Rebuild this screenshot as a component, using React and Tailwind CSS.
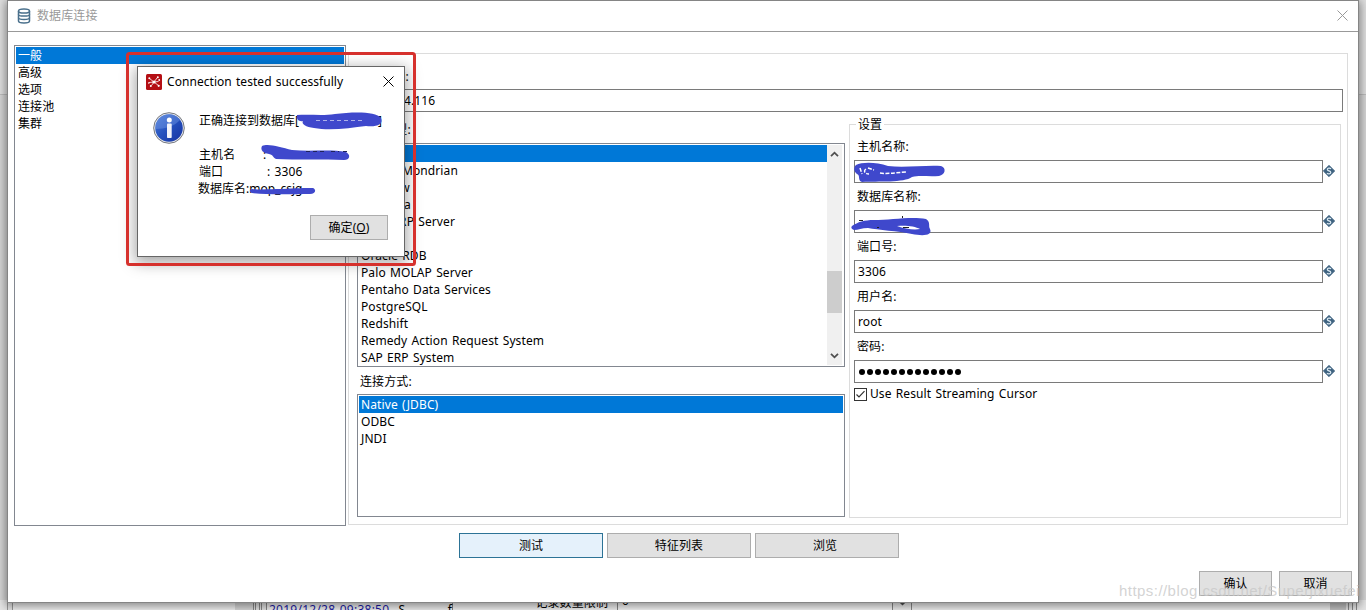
const categories = ['一般', '高级', '选项', '连接池', '集群'];

const databases = [
    { name: 'MySQL' },
    { name: 'Native Mondrian' },
    { name: 'Neoview' },
    { name: 'Netezza', className: 'tracking-[0.8px]' },
    { name: 'OpenERP Server' },
    { name: 'Oracle' },
    { name: 'Oracle RDB' },
    { name: 'Palo MOLAP Server' },
    { name: 'Pentaho Data Services' },
    { name: 'PostgreSQL' },
    { name: 'Redshift' },
    { name: 'Remedy Action Request System' },
    { name: 'SAP ERP System' },
];

const accessMethods = ['Native (JDBC)', 'ODBC', 'JNDI'];

const fields = [
    { label: '主机名称:' },
    { label: '数据库名称:' },
    { label: '端口号:', value: '3306' },
    { label: '用户名:', value: 'root' },
    { label: '密码:', password: true },
];

const CloseIcon = ({ className }) => (
    <svg width="11" height="11" viewBox="0 0 11 11" className={className} fill="none" stroke="currentColor">
        <path d="M0.5 0.5 L10.5 10.5 M10.5 0.5 L0.5 10.5" />
    </svg>
);

const DatabaseIcon = () => (
    <svg width="14" height="16" viewBox="0 0 14 16" fill="#fff" stroke="#4a708c" strokeWidth="1.5">
        <path d="M1.5 3 V13 C1.5 15.6 12.5 15.6 12.5 13 V3" />
        <path d="M1.5 9.7 C1.5 12 12.5 12 12.5 9.7 M1.5 6.4 C1.5 8.6 12.5 8.6 12.5 6.4" fill="none" />
        <ellipse cx="7" cy="3" rx="5.5" ry="2.1" />
    </svg>
);

const PentahoIcon = () => (
    <svg width="16" height="16" viewBox="0 0 16 16" fill="none" stroke="#fff">
        <rect width="16" height="16" rx="1.5" fill="#b40f14" stroke="none" />
        <path d="M8 8 L3.5 4.5 M8 8 L11 4 M8 8 L12.5 11.5 M8 8 L5.5 11.5 M8 8 L3 8.5 M8 8 L12.5 7.5" strokeWidth="0.8" />
        <circle cx="8" cy="8" r="1.6" fill="#fff" stroke="none" />
        <g fill="#fff" stroke="none">
            <circle cx="3.3" cy="4.3" r="1" />
            <circle cx="11.8" cy="3.3" r="1" />
            <circle cx="13.2" cy="6" r="0.9" />
            <circle cx="12.7" cy="11.8" r="1.1" />
            <circle cx="4.8" cy="12" r="1" />
            <circle cx="2.8" cy="9" r="0.8" />
        </g>
    </svg>
);

const InfoIcon = () => (
    <svg width="32" height="32" viewBox="0 0 32 32">
        <defs>
            <linearGradient id="info-fill" x1="0" y1="0" x2="1" y2="1">
                <stop offset="0" stopColor="#4a7bd8" />
                <stop offset="0.5" stopColor="#2450bd" />
                <stop offset="1" stopColor="#1732a0" />
            </linearGradient>
        </defs>
        <circle cx="16" cy="16" r="15.3" fill="#e8eaee" stroke="#74777e" />
        <circle cx="16" cy="16" r="13.8" fill="url(#info-fill)" />
        <path d="M2.5 17 A13.5 13.5 0 0 1 27 8 C22 14 12 17 2.5 17" fill="#7ba0e8" opacity="0.4" />
        <circle cx="16.3" cy="8" r="2.5" fill="#fff" />
        <rect x="14" y="11.6" width="4.7" height="14.4" rx="0.8" fill="#f1f3fa" />
    </svg>
);

const VariableIcon = () => (
    <svg width="12" height="12" viewBox="0 0 12 12" className="mb-[2px] shrink-0">
        <path d="M6 0.3 L11.7 6 L6 11.7 L0.3 6 Z" fill="#3f6380" stroke="#3f6380" strokeLinejoin="round" strokeWidth="0.8" />
        <path d="M8 3.8 C7 2.8 4.2 2.9 4.3 4.6 C4.4 6.2 7.8 5.6 7.8 7.4 C7.8 9.1 5 9.2 4 8.1" fill="none" stroke="#dce9f2" strokeWidth="1.2" />
    </svg>
);

const Chevron = ({ down }) => (
    <svg width="9" height="6" viewBox="0 0 9 6" fill="none" stroke="#505050" strokeWidth="1.8">
        <path d={down ? 'M1 0.8 L4.5 4.3 L8 0.8' : 'M1 5.2 L4.5 1.7 L8 5.2'} />
    </svg>
);

const ListRow = ({ selected, className = '', children }) => (
    <div className={`h-[17px] pl-[2px] leading-[17px] ${selected ? 'bg-[#0078d7] text-white' : ''} ${className}`}>
        {children}
    </div>
);

const Button = ({ className, children }) => (
    <button className={`flex h-[25px] items-center justify-center border ${className}`}>{children}</button>
);

// Window partly visible around the edges of the dialog
const BackgroundWindow = () => (
    <div className="flex h-[610px] flex-col justify-between bg-[#d4d4d4]">
        <div className="h-[95px] border-b border-[#bcbcbc] bg-[#dedede]" />
        <div className="flex h-[10px] overflow-hidden bg-[#e4e4e4]">
            <div className="ml-[7px] w-[6px] border-x border-[#999]" />
            <div className="w-[222px] bg-[#f2f2f2]" />
            <div className="w-[18px] bg-[#d9d9d9]" />
            <div className="w-[3px] border-x border-[#888]" />
            <div className="ml-[3px] w-[3px] border-x border-[#888]" />
            <div className="ml-[4px] flex w-[187px] border-x border-[#888] bg-[#eee] pl-[2px] leading-[19px] whitespace-pre text-[#1a1aa6]">
                <span className="w-[131px] tracking-[0.25px]">2019/12/28 09:38:50</span>
                <span className="w-[50px] text-black">S</span>
                <span className="text-black">f</span>
            </div>
            <div className="w-[164px] bg-[#f2f2f2] pr-[9px] text-right leading-[5px]">记录数量限制</div>
            <div className="w-[276px] border-x border-[#888] bg-[#f6f6f6] pl-1 leading-[2px]">0</div>
            <div className="flex w-[19px] justify-center border-r border-[#888] bg-[#eee]">
                <Chevron down />
            </div>
            <div className="grow bg-[#f0f0f0]" />
            <div className="w-[16px] bg-[#c2c2c2]" />
            <div className="mr-[9px] ml-[2px] flex w-[9px] justify-between border-x border-[#888]">
                <div className="ml-[3px] w-px bg-[#888]" />
            </div>
        </div>
    </div>
);

const SettingsField = ({ label, value, password }) => (
    <div className="h-[50px]">
        <div className="h-[25px] pl-[3px] leading-[21px]">{label}</div>
        <div className="-mt-px flex items-center">
            <div className="flex h-[23px] w-[469px] items-center border border-[#7a7a7a] pl-[3px]">
                {password ? (
                    <div className="ml-px flex gap-[2px]">
                        {Array.from({ length: 13 }, (_, i) => (
                            <span key={i} className="size-[6px] rounded-full bg-black" />
                        ))}
                    </div>
                ) : (
                    value
                )}
            </div>
            <VariableIcon />
        </div>
    </div>
);

const Settings = () => (
    <div className="relative h-[394px] w-[492px] border border-[#dcdcdc] pt-[11px] pl-[4px]">
        <span className="absolute -top-[9px] left-[6px] bg-white px-[2px] leading-[18px]">设置</span>
        {fields.map((field) => (
            <SettingsField key={field.label} {...field} />
        ))}
        <div className="mt-px flex items-center gap-[3px]">
            <svg width="13" height="13" viewBox="0 0 13 13" fill="none" stroke="#333">
                <rect x="0.5" y="0.5" width="12" height="12" />
                <path d="M2.5 6.5 L5 9 L10.5 3.2" strokeWidth="1.2" />
            </svg>
            <span className="leading-[14px]">Use Result Streaming Cursor</span>
        </div>
    </div>
);

const ConnectionDialog = () => (
    <div className="absolute top-0 left-[7px] flex h-[603px] w-[1352px] flex-col border border-[#858585] bg-white shadow-[0_2px_9px_1px_rgba(0,0,0,0.45)]">
        <div className="flex h-[31px] items-center border-b border-[#999] pr-[10px] pl-[9px] text-[#999]">
            <DatabaseIcon />
            <span className="ml-[6px] grow">数据库连接</span>
            <CloseIcon className="mb-[2px]" />
        </div>
        <div className="flex pt-[13px] pl-[6px]">
            <div className="h-[481px] w-[332px] border border-[#828790] p-px">
                {categories.map((name, index) => (
                    <ListRow key={name} selected={index === 0}>{name}</ListRow>
                ))}
            </div>
            <div className="mt-[8px] ml-[2px] h-[472px] w-[1000px] border border-[#dcdcdc] pl-[8px]">
                <div className="mt-[14px] h-[21px] leading-[18px]">连接名称:</div>
                <div className="h-[23px] w-[986px] border border-[#7a7a7a] pl-[39px] leading-[21px]">04.116</div>
                <div className="flex pt-[12px]">
                    <div className="w-[488px]">
                        <div className="-mt-[3px] h-[22px] pl-[2px] leading-[18px]">连接类型:</div>
                        <div className="flex h-[224px] justify-between border border-[#828790] p-px">
                            <div className="grow">
                                {databases.map(({ name, className }, index) => (
                                    <ListRow key={name} selected={index === 0} className={className}>{name}</ListRow>
                                ))}
                            </div>
                            <div className="mr-px flex w-[15px] flex-col items-center justify-between bg-[#f0f0f0] py-[6px]">
                                <Chevron />
                                <div className="mt-[73px] h-[42px] w-full bg-[#cdcdcd]" />
                                <Chevron down />
                            </div>
                        </div>
                        <div className="h-[27px] pt-[6px] pl-[3px] leading-[18px]">连接方式:</div>
                        <div className="h-[123px] border border-[#828790] p-px">
                            {accessMethods.map((name, index) => (
                                <ListRow key={name} selected={index === 0}>{name}</ListRow>
                            ))}
                        </div>
                    </div>
                    <div className="ml-[4px]">
                        <Settings />
                    </div>
                </div>
            </div>
        </div>
        <div className="mt-[7px] ml-[451px] flex gap-[4px]">
            <Button className="w-[144px] border-[#2c7396] bg-[#e5f1fb]">测试</Button>
            <Button className="w-[144px] border-[#adadad] bg-[#e1e1e1]">特征列表</Button>
            <Button className="w-[144px] border-[#adadad] bg-[#e1e1e1] pr-[4px]">浏览</Button>
        </div>
        <div className="mt-[13px] flex justify-end gap-[7px] pr-[6px]">
            <Button className="w-[73px] border-[#adadad] bg-[#e1e1e1]">确认</Button>
            <Button className="w-[73px] border-[#adadad] bg-[#e1e1e1]">取消</Button>
        </div>
    </div>
);

const ResultPopup = () => (
    <div className="absolute top-[66px] left-[137px] h-[191px] w-[268px] border border-[#666] bg-white shadow-[0_4px_14px_2px_rgba(0,0,0,0.35)]">
        <div className="flex h-[29px] items-center pr-[10px] pl-[8px]">
            <PentahoIcon />
            <span className="ml-[5px] grow tracking-[0.05px]">Connection tested successfully</span>
            <CloseIcon className="mb-px" />
        </div>
        <div className="flex pt-[16px] pl-[15px]">
            <InfoIcon />
            <div className="ml-[14px] leading-[17px] whitespace-pre">
                <div className="tracking-normal">正确连接到数据库[<span className="inline-block w-[79px]" />]</div>
                <div className="mt-[17px] flex"><span className="w-[64px]">主机名</span>:</div>
                <div className="flex"><span className="w-[68px]">端口</span>: 3306</div>
                <div className="-ml-px tracking-normal">数据库名:mop_csjg</div>
            </div>
        </div>
        <Button className="mt-[18px] ml-[172px] w-[78px] border-[#adadad] bg-[#e1e1e1]">
            确定(<span className="underline">O</span>)
        </Button>
    </div>
);

// Hand-drawn marks over the private values, plus the red frame round the popup
const Annotations = () => (
    <svg width="1366" height="610" viewBox="0 0 1366 610" className="pointer-events-none absolute inset-0" fill="none">
        <rect x="127.5" y="53.5" width="287" height="211" rx="2" stroke="#d6312d" strokeWidth="3" />
        <g fill="#3f48cc">
            <path d="M297 115 C310 114 322 116 335 114 C352 112 376 111 381 118 C384 125 376 127 366 126 C350 128 330 131 314 128 C306 127 301 124 303 121 C299 122 296 119 297 115 Z" />
            <path d="M262 146 C268 143 280 147 292 150 C310 152 330 149 346 152 C351 155 350 160 344 160 C325 159 295 160 276 159 C272 157 274 155 269 154 C263 153 260 150 262 146 Z" />
            <path d="M252 189 C262 190 270 189 282 189 C294 188 306 188 313 188 C317 190 315 194 310 194 C294 194 266 195 252 193 C249 192 249 190 252 189 Z" />
            <path d="M856 165 C862 162 876 162 888 166 C904 168 925 165 941 166 C947 168 945 175 939 176 C928 177 920 175 912 177 C904 183 878 181 862 182 C857 180 861 176 857 174 C853 171 854 167 856 165 Z" />
            <path d="M852 226 C858 222 864 220 874 220 C890 220 912 216 926 219 C931 222 928 226 930 229 C933 236 922 236 912 234 C898 231 878 230 868 228 C862 228 858 230 854 230 C851 229 851 227 852 226 Z" />
        </g>
        <path d="M860 168 L862 174 M866 169 C863 171 865 174 869 174 M868 168 L874 170 M880 173 C886 174 894 173 906 172" stroke="#fff" strokeWidth="1.5" strokeDasharray="4 1.5" />
        <path d="M897 226 C905 225 915 226 920 229 C914 230 905 229 897 226" fill="#fff" />
        <path d="M859 220.5 H863 M902.5 216 V218 M903 227.5 H909 M877 227.5 H879" stroke="#222" />
        <path d="M316 120.5 H362" stroke="#c9ccf0" strokeWidth="0.8" strokeDasharray="4 3" />
        <path d="M306 151.5 H326 M331 151.5 H339 M343 151.5 H348" stroke="#20235a" strokeDasharray="4 3" />
    </svg>
);

export default function App() {
    return (
        <div className="relative h-[610px] w-[1366px] overflow-hidden font-['Noto_Sans','Noto_Sans_CJK_SC',sans-serif] text-[12px] tracking-[0.1px] text-black [word-spacing:1px]">
            <BackgroundWindow />
            <ConnectionDialog />
            <ResultPopup />
            <Annotations />
            <div className="absolute top-[582px] left-[1119px] font-['Liberation_Sans',sans-serif] text-[15px] leading-[18px] tracking-[0.45px] whitespace-nowrap text-[#c8c8c8]/80">
                https://blog.csdn.net/Superjixuefei
            </div>
        </div>
    );
}
